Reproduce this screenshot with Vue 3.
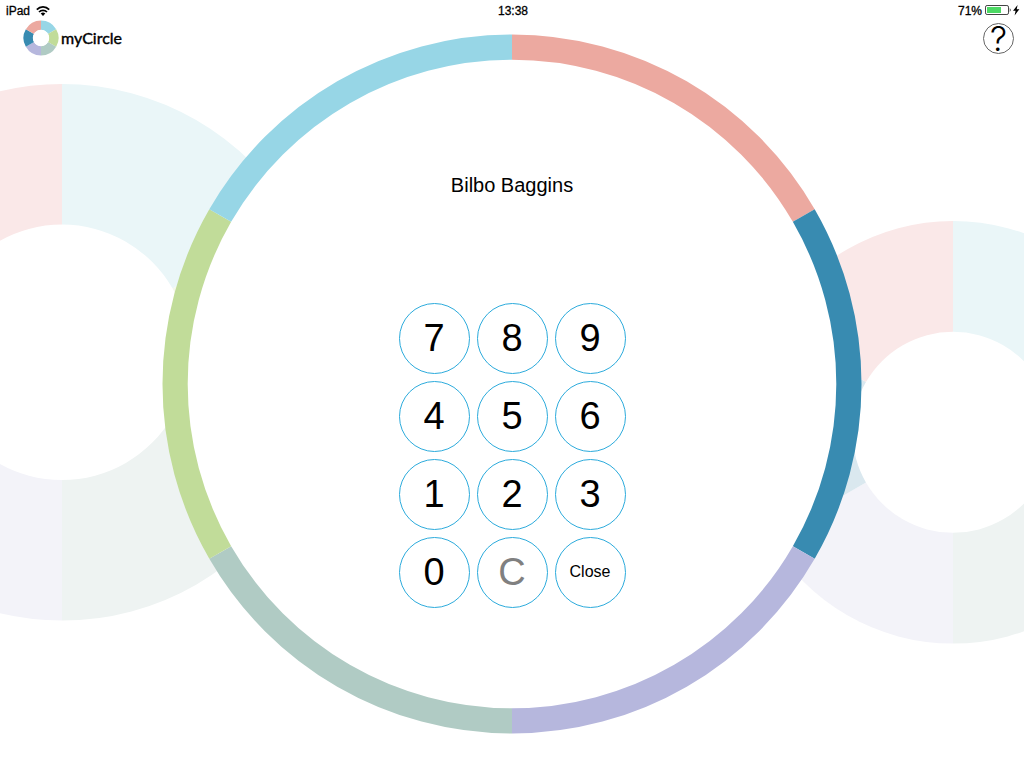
<script setup>
const colors = {
  sky: '#97d6e6',
  lime: '#c1dc99',
  sage: '#b0cbc4',
  lilac: '#b6b7dd',
  ocean: '#388bb1',
  coral: '#eca9a0',
}
const pale = {
  sky: '#eaf6f8',
  lime: '#f3f8ea',
  sage: '#eef3f2',
  lilac: '#f3f3f9',
  ocean: '#dae8ef',
  coral: '#fae8e8',
}
const clockwise = ['sky', 'lime', 'sage', 'lilac', 'ocean', 'coral']
const mirrored = ['coral', 'ocean', 'lilac', 'sage', 'lime', 'sky']

function ring(cx, cy, outer, inner, palette, order) {
  const at = (r, deg) => {
    const a = ((deg - 90) * Math.PI) / 180
    return `${(cx + r * Math.cos(a)).toFixed(2)} ${(cy + r * Math.sin(a)).toFixed(2)}`
  }
  return order.map((name, i) => {
    const from = i * 60
    const to = from + 60
    return {
      fill: palette[name],
      d: `M${at(outer, from)}A${outer} ${outer} 0 0 1 ${at(outer, to)}L${at(inner, to)}A${inner} ${inner} 0 0 0 ${at(inner, from)}Z`,
    }
  })
}

const sideRings = [
  ...ring(62, 352.3, 268.3, 127.7, pale, clockwise),
  ...ring(953, 432.3, 211.3, 100.5, pale, clockwise),
]
const mainRing = ring(512, 384, 349.5, 324.3, colors, mirrored)
const logoRing = ring(18, 18, 17.5, 8, colors, clockwise)

const keys = ['7', '8', '9', '4', '5', '6', '1', '2', '3', '0']
</script>

<template>
  <div class="screen">
    <svg class="backdrop" viewBox="0 0 1024 768" preserveAspectRatio="xMidYMid slice" aria-hidden="true">
      <path v-for="(s, i) in sideRings" :key="'s' + i" :d="s.d" :fill="s.fill" />
      <circle cx="512" cy="384" r="340" fill="#fff" />
      <path v-for="(s, i) in mainRing" :key="'m' + i" :d="s.d" :fill="s.fill" />
    </svg>

    <div class="status">
      <div class="side">
        <span>iPad</span>
        <svg width="14" height="10" viewBox="0 0 14 10" role="img" aria-label="Wi-Fi">
          <g fill="none" stroke="#000" stroke-width="1.7">
            <path d="M.8 3.7C4.2 0 9.8 0 13.2 3.7" />
            <path d="M3 6C5.2 3.7 8.8 3.7 11 6" />
          </g>
          <path d="M4.7 7.5Q7 5.5 9.3 7.5L7 9.9Z" />
        </svg>
      </div>
      <span class="time">13:38</span>
      <div class="side end">
        <span>71%</span>
        <svg width="35" height="11" viewBox="0 0 35 11" role="img" aria-label="Battery charging">
          <rect x=".5" y=".5" width="23" height="9" rx="1.6" fill="#fff" stroke="#444" />
          <rect x="2" y="2" width="14" height="6" fill="#4cd964" />
          <path d="M24.8 3Q26.6 5 24.8 7Z" />
          <path d="M32.6 0L28 5.8H30.6L29.6 10.4L34.4 4.2H31.7Z" />
        </svg>
      </div>
    </div>

    <header class="bar">
      <div class="brand">
        <svg width="36" height="36" viewBox="0 0 36 36" aria-hidden="true">
          <circle cx="18" cy="18" r="12" fill="#fff" />
          <path v-for="(s, i) in logoRing" :key="i" :d="s.d" :fill="s.fill" />
          <circle cx="18" cy="18" r="8.2" fill="#fff" />
        </svg>
        <span class="name">myCircle</span>
      </div>
      <button class="help" type="button" aria-label="Help">?</button>
    </header>

    <main class="login">
      <h1>Bilbo Baggins</h1>
      <div class="pad">
        <button v-for="k in keys" :key="k" type="button">{{ k }}</button>
        <button class="clear" type="button">C</button>
        <button class="close" type="button">Close</button>
      </div>
    </main>
  </div>
</template>

<style>
body {
  margin: 0;
  background: #fff;
}
</style>

<style scoped>
.screen {
  position: relative;
  min-height: 100vh;
  overflow: hidden;
  font-family: "Liberation Sans", Arial, sans-serif;
  color: #000;
}
.backdrop {
  position: absolute;
  inset: 0;
  width: 100%;
  height: 100%;
}
.status,
.bar,
.login {
  position: relative;
}
.status {
  display: grid;
  grid-template-columns: 1fr auto 1fr;
  align-items: center;
  height: 20px;
  padding: 1px 4px 0 6px;
  box-sizing: border-box;
  font-size: 12px;
  line-height: 18px;
  -webkit-text-stroke: 0.3px #000;
}
.side {
  display: flex;
  align-items: center;
  gap: 6px;
}
.end {
  justify-content: flex-end;
  gap: 3px;
}
.bar {
  display: flex;
  align-items: center;
  justify-content: space-between;
  height: 36px;
  padding: 0 10px 0 23px;
}
.brand {
  display: flex;
  align-items: center;
  gap: 2px;
}
.name {
  font-family: Lato, sans-serif;
  font-size: 16px;
  line-height: 20px;
  -webkit-text-stroke: 0.4px #000;
}
button {
  box-sizing: border-box;
  padding: 0;
  border-radius: 50%;
  background: #fff;
  font-family: inherit;
  color: #000;
  cursor: pointer;
}
.help {
  width: 31px;
  height: 31px;
  border: 1px solid #666;
  font-family: Inter, "Liberation Sans", sans-serif;
  font-weight: 300;
  font-size: 34px;
  line-height: 29px;
}
.login {
  display: flex;
  flex-direction: column;
  align-items: center;
  padding-top: 117px;
}
h1 {
  margin: 0;
  font-size: 20px;
  line-height: 24px;
  font-weight: 400;
}
.pad {
  display: grid;
  grid-template-columns: repeat(3, 71px);
  gap: 7px;
  margin-top: 106px;
}
.pad button {
  height: 71px;
  padding-bottom: 2px;
  border: 1px solid #2cabdc;
  font-size: 38px;
  line-height: 44px;
}
.pad .clear {
  color: #808080;
}
.pad .close {
  font-size: 16px;
  line-height: 20px;
}
</style>
